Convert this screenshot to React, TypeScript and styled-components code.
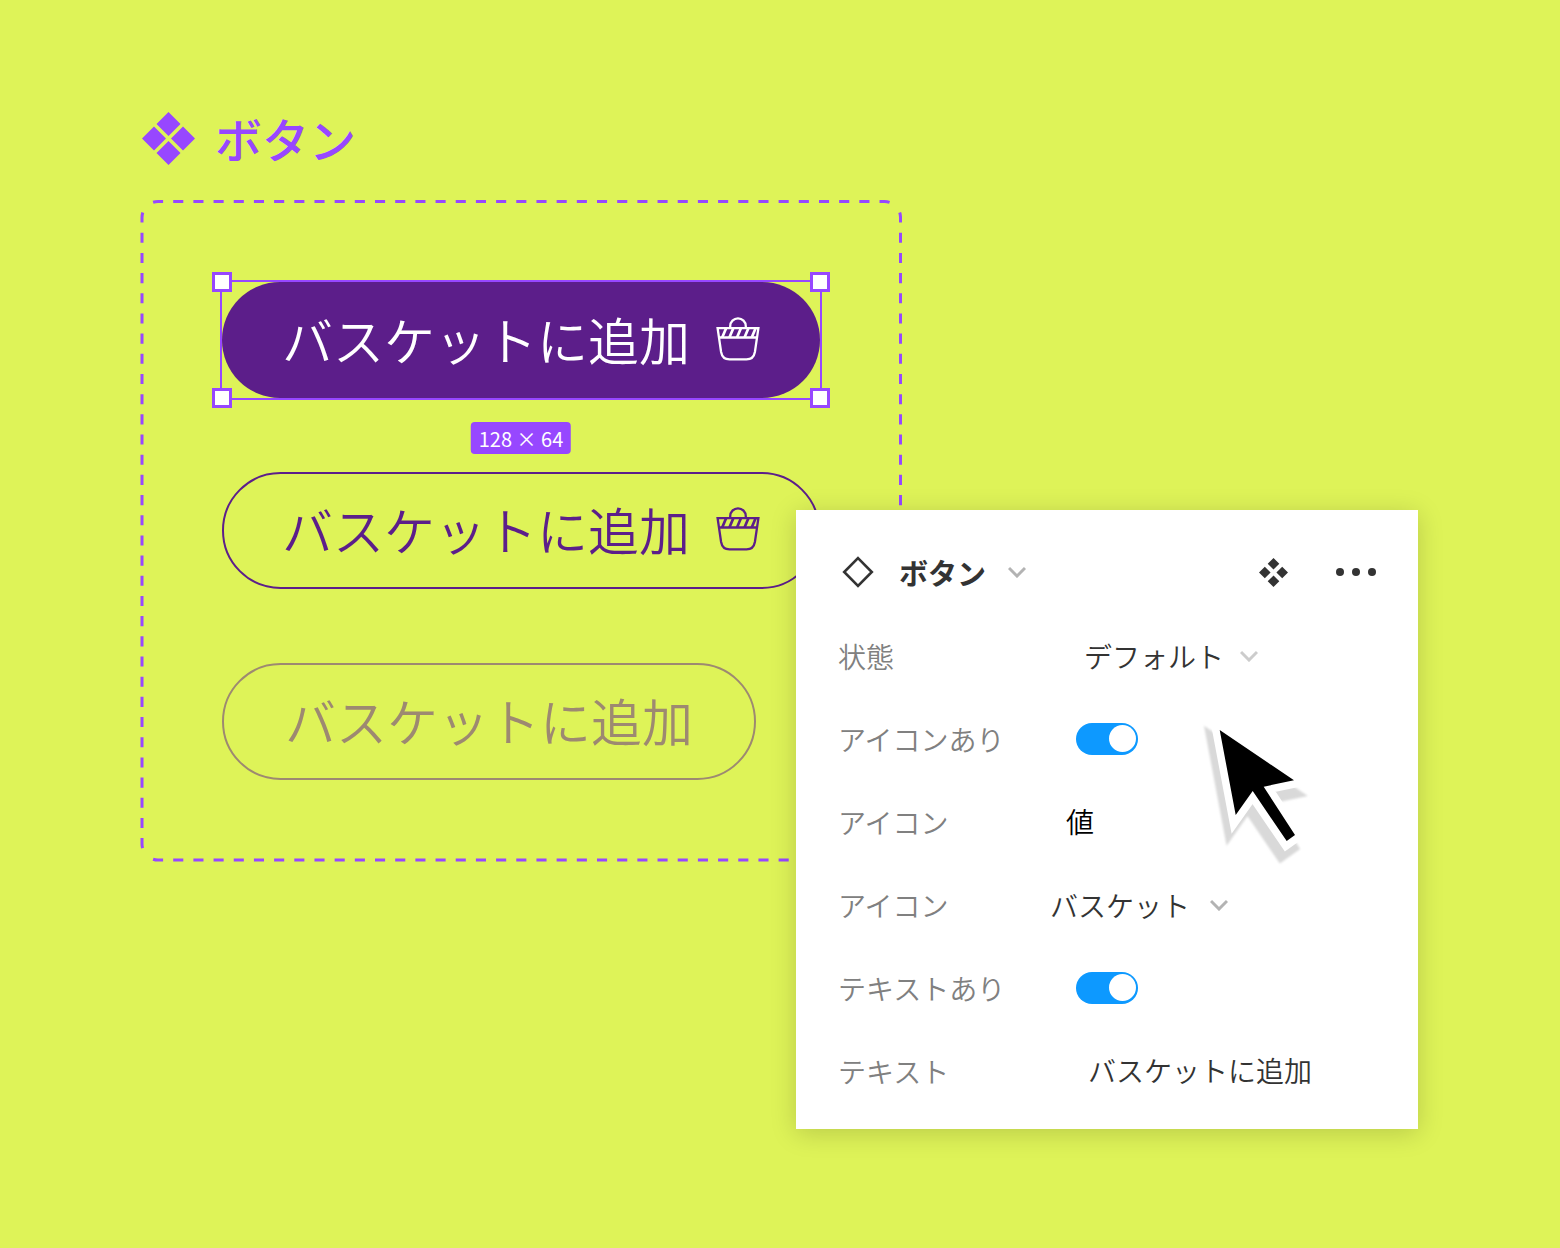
import React, { useState } from "react";
import styled, { createGlobalStyle } from "styled-components";

const color = {
  canvas: "#def358",
  accent: "#9747ff",
  brand: "#5c1e8a",
  muted: "#9d8971",
  ink: "#333333",
  label: "#808080",
  chevron: "#b3b3b3",
  chevronLight: "#cccccc",
  toggle: "#0d99ff",
};

const GlobalStyle = createGlobalStyle`
  *, *::before, *::after { box-sizing: border-box; }
  body {
    margin: 0;
    background: ${color.canvas};
    font-family: "Noto Sans CJK JP", "Noto Sans", sans-serif;
  }
  button, input, select { font: inherit; color: inherit; }
`;

const Canvas = styled.main`
  position: relative;
  min-height: 100vh;
  padding: 108px 140px;
  overflow: hidden;
`;

const ComponentSet = styled.section`
  width: fit-content;
`;

const SetTitle = styled.h1`
  display: flex;
  align-items: center;
  gap: 20px;
  margin: 0 0 32px;
  padding-left: 2px;
  height: 60px;
  color: ${color.accent};
  font-size: 47px;
  line-height: 60px;
  font-weight: 500;
`;

const Frame = styled.div`
  position: relative;
  display: flex;
  flex-direction: column;
  align-items: flex-start;
  gap: 74px;
  padding: 82px 82px 83px;
`;

const FrameOutline = styled.svg`
  position: absolute;
  inset: 0;
  width: 100%;
  height: 100%;
  fill: none;
  stroke: ${color.accent};
  stroke-width: 3;
  stroke-dasharray: 10.09 10.09;
  stroke-dashoffset: -7.5;
  pointer-events: none;
`;

const Selected = styled.div`
  position: relative;

  &::after {
    content: "";
    position: absolute;
    inset: -2px;
    border: 2px solid ${color.accent};
    pointer-events: none;
  }
`;

const Handle = styled.span<{ $v: "top" | "bottom"; $h: "left" | "right" }>`
  position: absolute;
  z-index: 1;
  ${(p) => p.$v}: -10px;
  ${(p) => p.$h}: -10px;
  width: 20px;
  height: 20px;
  border: 3px solid ${color.accent};
  background: #ffffff;
`;

const SizeBadge = styled.span`
  position: absolute;
  top: 140px;
  left: 50%;
  transform: translateX(-50%);
  padding: 2px 8px 0;
  border-radius: 4px;
  background: ${color.accent};
  color: #ffffff;
  font-size: 20px;
  line-height: 30px;
  white-space: nowrap;
`;

const PillButton = styled.button<{ $kind: "solid" | "outline" | "disabled" }>`
  display: flex;
  align-items: center;
  gap: 26px;
  height: ${(p) => (p.$kind === "solid" ? 116 : 117)}px;
  padding: 0 ${(p) => (p.$kind === "disabled" ? 61 : p.$kind === "outline" ? 58 : 60)}px 3px;
  border: ${(p) => (p.$kind === "solid" ? "0" : "2px solid currentColor")};
  border-radius: 59px;
  background: ${(p) => (p.$kind === "solid" ? color.brand : "transparent")};
  color: ${(p) =>
    p.$kind === "solid" ? "#ffffff" : p.$kind === "outline" ? color.brand : color.muted};
  font-size: 51px;
  line-height: 76px;
  font-weight: 350;
  white-space: nowrap;
`;

const Panel = styled.aside`
  position: absolute;
  left: 796px;
  top: 510px;
  width: 622px;
  padding: 20px 42px 17px;
  background: #ffffff;
  box-shadow: 0 4px 24px rgba(0, 0, 0, 0.17);
  color: ${color.ink};
  font-size: 28px;
  line-height: 42px;
  font-weight: 350;
`;

const PanelHeader = styled.header`
  display: flex;
  align-items: center;
  justify-content: space-between;
  height: 84px;
`;

const Actions = styled.div`
  display: flex;
  align-items: center;
  gap: 48px;
`;

const IconButton = styled.button`
  display: flex;
  padding: 0;
  border: 0;
  background: none;
  color: ${color.ink};
`;

const TitleButton = styled(IconButton)`
  align-items: center;
  gap: 22px;
  padding-left: 4px;
`;

const PanelTitle = styled.h2`
  display: flex;
  margin: 0 0 0 3px;
  font-size: 29px;
  line-height: 42px;
  font-weight: 700;
`;

const Row = styled.div<{ $column: number }>`
  display: grid;
  grid-template-columns: ${(p) => p.$column}px 1fr;
  align-items: center;
  height: 83px;
`;

const Label = styled.label`
  color: ${color.label};
`;

const SelectBox = styled.div`
  display: flex;
  align-items: center;
  gap: 16px;
`;

const Select = styled.select<{ $width: number }>`
  appearance: none;
  width: ${(p) => p.$width}px;
  padding: 0;
  border: 0;
  background: none;
  line-height: 42px;
`;

const TextInput = styled.input<{ $strong?: boolean }>`
  width: 100%;
  height: 42px;
  padding: 0 0 2px;
  border: 0;
  background: none;
  color: ${(p) => (p.$strong ? "#000000" : color.ink)};
`;

const Toggle = styled.input`
  appearance: none;
  display: flex;
  align-items: center;
  width: 62px;
  height: 32px;
  margin: 0;
  padding: 0 2px;
  border-radius: 16px;
  background: ${color.chevron};

  &::before {
    content: "";
    width: 27px;
    height: 27px;
    border-radius: 50%;
    background: #ffffff;
  }
  &:checked {
    justify-content: flex-end;
    background: ${color.toggle};
  }
`;

const Pointer = styled.svg`
  position: absolute;
  left: 1190px;
  top: 705px;
  pointer-events: none;
`;

const FourDiamonds = ({ size, r }: { size: number; r: number }) => {
  const c = size / 2;
  const d = (x: number, y: number) => `M${x} ${y - r}l${r} ${r}l${-r} ${r}l${-r} ${-r}z`;
  return (
    <svg width={size} height={size} fill="currentColor" aria-hidden="true">
      <path d={d(c, r) + d(r, c) + d(size - r, c) + d(c, size - r)} />
    </svg>
  );
};

const Chevron = ({ stroke = color.chevron }: { stroke?: string }) => (
  <svg width="18" height="12" fill="none" stroke={stroke} strokeWidth="3" aria-hidden="true">
    <path d="M1 2l8 8l8-8" />
  </svg>
);

const Basket = () => (
  <svg width="44" height="44" fill="none" stroke="currentColor" strokeWidth="2.3" aria-hidden="true">
    <path d="M1.6 11.1H42.4L38.9 35C38 40 34.500 42.400 30.500 42.400H13.500C9.500 42.400 6 40 5.100 35Z" />
    <path d="M3 20.500H41M14.200 11V9.200a7.800 7.800 0 0 1 15.600 0V11" />
    <path
      strokeWidth="2.7"
      d="M6.200 20.500L10 11.500M13.400 20.500L17.200 11.500M21 20.500L24.800 11.500M28.500 20.500L32.300 11.500M35.700 20.500L39.500 11.500"
    />
  </svg>
);

const arrow = "M29.700 25L104 75.300L73.700 81.700L105 130L96.700 136L62.700 86L45.700 110Z";

const buttonText = "バスケットに追加";

export default function App() {
  const [hasIcon, setHasIcon] = useState(true);
  const [hasText, setHasText] = useState(true);
  return (
    <>
      <GlobalStyle />
      <Canvas>
        <ComponentSet>
          <SetTitle>
            <FourDiamonds size={53} r={12} />
            ボタン
          </SetTitle>
          <Frame>
            <FrameOutline viewBox="0 0 762 663" preserveAspectRatio="none" aria-hidden="true">
              <path d="M6.700 6.200A16 16 0 0 1 18 1.500H744.500A16 16 0 0 1 755.800 6.200" />
              <path d="M6.700 655.300A16 16 0 0 0 18 660H744.500A16 16 0 0 0 755.800 655.300" />
              <path d="M6.700 6.200A16 16 0 0 0 2 17.500V644A16 16 0 0 0 6.700 655.300" />
              <path d="M755.800 6.200A16 16 0 0 1 760.500 17.500V644A16 16 0 0 1 755.800 655.300" />
            </FrameOutline>
            <Selected>
              <PillButton type="button" $kind="solid">
                {buttonText}
                <Basket />
              </PillButton>
              <Handle $v="top" $h="left" />
              <Handle $v="top" $h="right" />
              <Handle $v="bottom" $h="left" />
              <Handle $v="bottom" $h="right" />
              <SizeBadge>128 × 64</SizeBadge>
            </Selected>
            <PillButton type="button" $kind="outline">
              {buttonText}
              <Basket />
            </PillButton>
            <PillButton type="button" $kind="disabled" disabled>
              {buttonText}
            </PillButton>
          </Frame>
        </ComponentSet>

        <Panel>
          <PanelHeader>
            <TitleButton type="button">
              <svg width="32" height="32" fill="none" stroke="currentColor" strokeWidth="2.6" aria-hidden="true">
                <path d="M16 2.200L29.800 16L16 29.800L2.200 16Z" />
              </svg>
              <PanelTitle>ボタン</PanelTitle>
              <Chevron />
            </TitleButton>
            <Actions>
              <IconButton type="button" aria-label="コンポーネント">
                <FourDiamonds size={29} r={5.8} />
              </IconButton>
              <IconButton type="button" aria-label="その他">
                <svg width="40" height="8" fill="currentColor" aria-hidden="true">
                  <circle cx="4" cy="4" r="4" />
                  <circle cx="20" cy="4" r="4" />
                  <circle cx="36" cy="4" r="4" />
                </svg>
              </IconButton>
            </Actions>
          </PanelHeader>

          <Row $column={246}>
            <Label htmlFor="state">状態</Label>
            <SelectBox>
              <Select id="state" $width={140}>
                <option>デフォルト</option>
              </Select>
              <Chevron stroke={color.chevronLight} />
            </SelectBox>
          </Row>
          <Row $column={238}>
            <Label htmlFor="has-icon">アイコンあり</Label>
            <Toggle
              id="has-icon"
              type="checkbox"
              checked={hasIcon}
              onChange={(e) => setHasIcon(e.target.checked)}
            />
          </Row>
          <Row $column={228}>
            <Label htmlFor="icon-value">アイコン</Label>
            <TextInput id="icon-value" $strong defaultValue="値" />
          </Row>
          <Row $column={212}>
            <Label htmlFor="icon">アイコン</Label>
            <SelectBox>
              <Select id="icon" $width={144}>
                <option>バスケット</option>
              </Select>
              <Chevron />
            </SelectBox>
          </Row>
          <Row $column={238}>
            <Label htmlFor="has-text">テキストあり</Label>
            <Toggle
              id="has-text"
              type="checkbox"
              checked={hasText}
              onChange={(e) => setHasText(e.target.checked)}
            />
          </Row>
          <Row $column={250}>
            <Label htmlFor="text">テキスト</Label>
            <TextInput id="text" defaultValue={buttonText} />
          </Row>
        </Panel>

        <Pointer width="140" height="170" aria-hidden="true">
          <defs>
            <filter id="soften" x="-50%" y="-50%" width="200%" height="200%">
              <feGaussianBlur stdDeviation="1" />
            </filter>
          </defs>
          <path
            d={arrow}
            transform="translate(-5 12)"
            fill="#d9d9d9"
            stroke="#d9d9d9"
            strokeWidth="15"
            strokeMiterlimit="10"
            filter="url(#soften)"
          />
          <path d={arrow} fill="#ffffff" stroke="#ffffff" strokeWidth="15" strokeMiterlimit="10" />
          <path d={arrow} fill="#000000" />
        </Pointer>
      </Canvas>
    </>
  );
}
